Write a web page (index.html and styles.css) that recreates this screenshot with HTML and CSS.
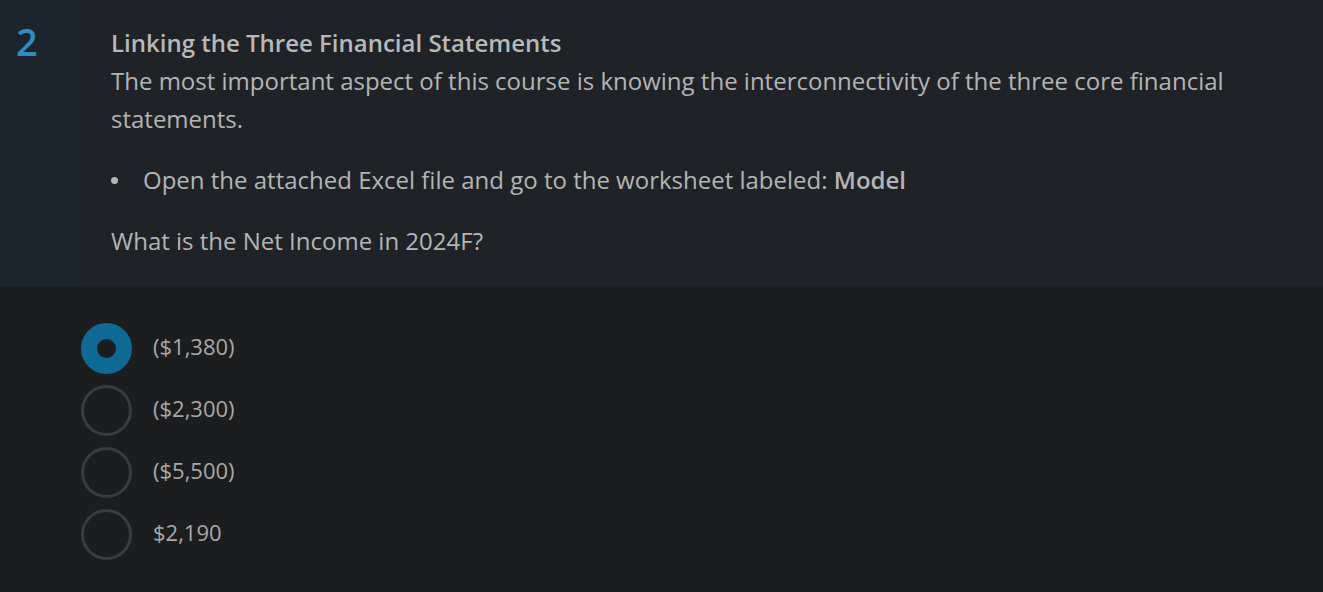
FILE: index.html
```html
<!DOCTYPE html>
<html>
<head>
<meta charset="utf-8">
<link rel="stylesheet" href="styles.css">
</head>
<body>
<div class="question">
  <div class="num">2</div>
  <div class="content">
    <div class="title">Linking the Three Financial Statements</div>
    <p class="desc">The most important aspect of this course is knowing the interconnectivity of the three core financial statements.</p>
    <ul class="list">
      <li>Open the attached Excel file and go to the worksheet labeled:&nbsp;<b>Model</b></li>
    </ul>
    <p class="ask">What is the Net Income in 2024F?</p>
  </div>
</div>
<div class="options">
  <div class="opt"><span class="radio checked"></span><span class="label">($1,380)</span></div>
  <div class="opt"><span class="radio"></span><span class="label">($2,300)</span></div>
  <div class="opt"><span class="radio"></span><span class="label">($5,500)</span></div>
  <div class="opt"><span class="radio"></span><span class="label">$2,190</span></div>
</div>
</body>
</html>
```
FILE: styles.css
```css
html, body {
  margin: 0;
  padding: 0;
  background: #1c1d1f;
  font-family: "Open Sans", "Liberation Sans", sans-serif;
  color: #b4b4b4;
}
.question {
  display: flex;
  height: 287px;
  background: #1f2327;
}
.num {
  width: 80px;
  flex: none;
  background: #1c252b;
  color: #2d8fc1;
  font-size: 38px;
  font-weight: 600;
  line-height: 1;
  padding: 22px 0 0 16px;
  box-sizing: border-box;
}
.content {
  padding: 24px 0 0 31px;
}
.title {
  font-size: 24px;
  font-weight: 600;
  line-height: 38px;
  color: #b8b8b8;
}
.desc {
  margin: 0;
  font-size: 24px;
  line-height: 38px;
  max-width: 1160px;
}
.list {
  margin: 23px 0 0 0;
  padding: 0;
  list-style: none;
  font-size: 24px;
  line-height: 38px;
}
.list li {
  display: flex;
  align-items: flex-start;
}
.list li::before {
  content: "";
  flex: none;
  width: 7px;
  height: 7px;
  border-radius: 50%;
  background: #b4b4b4;
  margin: 16px 25px 0 0;
}
.list b {
  font-weight: 600;
}
.ask {
  margin: 23px 0 0 0;
  font-size: 24px;
  line-height: 38px;
}
.options {
  padding: 36px 0 0 81px;
  display: flex;
  flex-direction: column;
  gap: 11px;
}
.opt {
  display: flex;
  align-items: center;
  height: 51px;
}
.radio {
  width: 51px;
  height: 51px;
  box-sizing: border-box;
  border-radius: 50%;
  border: 3px solid #3a3b3d;
  flex: none;
}
.radio.checked {
  border: 16px solid #0e6a94;
  background: #1c1d1f;
}
.label {
  margin-left: 21px;
  font-size: 22px;
  line-height: 30px;
  padding-bottom: 5px;
  color: #a8a8a8;
}
```
